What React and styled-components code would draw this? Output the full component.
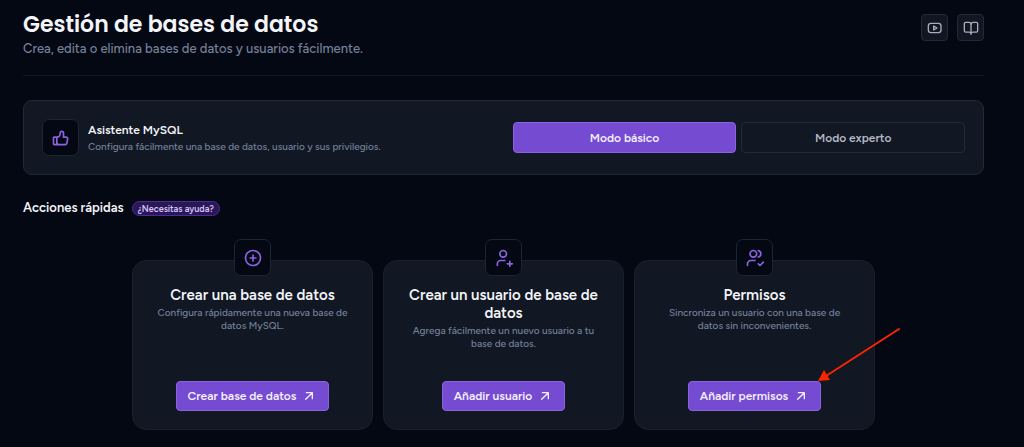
import React from 'react';
import styled, { createGlobalStyle } from 'styled-components';

const icons = {
  video: (
    <>
      <rect x="2" y="5" width="19" height="14" rx="4" />
      <path d="M10 9l5 3l-5 3z" />
    </>
  ),
  book: (
    <>
      <path d="M12 20c-.6 -1.200 -1.5 -1.800 -2.600 -1.800h-5.400a2 2 0 0 1 -2 -2v-10.700a2 2 0 0 1 2 -2h5a3 3 0 0 1 3 3" />
      <path d="M12 20c.6 -1.200 1.5 -1.800 2.600 -1.800h5.400a2 2 0 0 0 2 -2v-10.700a2 2 0 0 0 -2 -2h-5a3 3 0 0 0 -3 3v15" />
    </>
  ),
  thumb: (
    <path d="M7 11v8a1 1 0 0 1 -1 1h-2a1 1 0 0 1 -1 -1v-7a1 1 0 0 1 1 -1h3a4 4 0 0 0 4 -4v-1a2 2 0 0 1 4 0v5h3a2 2 0 0 1 2 2l-1 5a2 3 0 0 1 -2 2h-7a3 3 0 0 1 -3 -3" />
  ),
  plus: (
    <>
      <circle cx="12" cy="12" r="9" />
      <path d="M8.500 12h7M12 8.500v7" />
    </>
  ),
  userPlus: (
    <>
      <circle cx="11" cy="7" r="4" />
      <path d="M16 19h6M19 16v6" />
      <path d="M4 21v-2a4 4 0 0 1 4 -4h5" />
    </>
  ),
  usersCheck: (
    <>
      <circle cx="10" cy="7" r="4" />
      <path d="M16 3.130a4 4 0 0 1 0 7.750" />
      <path d="M3 21v-2a4 4 0 0 1 4 -4h5" />
      <path d="M16 19l2 2l4 -4" />
    </>
  ),
  arrow: (
    <path d="M17 7l-10 10M8 7h9v9" />
  ),
};

const Icon = ({ name, size = 20, stroke = 2 }) => (
  <svg
    width={size}
    height={size}
    viewBox="0 0 24 24"
    fill="none"
    stroke="currentColor"
    strokeWidth={stroke}
    strokeLinecap="round"
    strokeLinejoin="round"
    aria-hidden="true"
  >
    {icons[name]}
  </svg>
);

const actions = [
  {
    icon: 'plus',
    title: 'Crear una base de datos',
    text: 'Configura rápidamente una nueva base de datos MySQL.',
    button: 'Crear base de datos',
  },
  {
    icon: 'userPlus',
    title: 'Crear un usuario de base de datos',
    text: 'Agrega fácilmente un nuevo usuario a tu base de datos.',
    button: 'Añadir usuario',
  },
  {
    icon: 'usersCheck',
    title: 'Permisos',
    text: 'Sincroniza un usuario con una base de datos sin inconvenientes.',
    button: 'Añadir permisos',
    highlighted: true,
  },
];

const App = () => {
  return (
    <>
      <GlobalStyle />
      <Page>
        <Header>
          <div>
            <Title>Gestión de bases de datos</Title>
            <Subtitle>Crea, edita o elimina bases de datos y usuarios fácilmente.</Subtitle>
          </div>
          <HeaderTools>
            <ToolButton type="button" aria-label="Ver vídeo">
              <Icon name="video" size={16} />
            </ToolButton>
            <ToolButton type="button" aria-label="Documentación">
              <Icon name="book" size={16} />
            </ToolButton>
          </HeaderTools>
        </Header>

        <Assistant>
          <IconBox>
            <Icon name="thumb" />
          </IconBox>
          <AssistantText>
            <h2>Asistente MySQL</h2>
            <p>Configura fácilmente una base de datos, usuario y sus privilegios.</p>
          </AssistantText>
          <Modes>
            <ModeButton type="button" $active aria-pressed="true">Modo básico</ModeButton>
            <ModeButton type="button" aria-pressed="false">Modo experto</ModeButton>
          </Modes>
        </Assistant>

        <SectionHeader>
          <h2>Acciones rápidas</h2>
          <HelpLink href="#ayuda">¿Necesitas ayuda?</HelpLink>
        </SectionHeader>

        <Cards>
          {actions.map((action) => (
            <Card key={action.title}>
              <IconBox>
                <Icon name={action.icon} />
              </IconBox>
              <CardTitle>{action.title}</CardTitle>
              <CardText>{action.text}</CardText>
              <ButtonWrap>
                <ActionButton type="button">
                  {action.button}
                  <Icon name="arrow" size={16} />
                </ActionButton>
                {action.highlighted && (
                  <Pointer viewBox="0 0 84 56" aria-hidden="true">
                    <path d="M82 2L9 49" stroke="#fb2500" strokeWidth="2" strokeLinecap="round" />
                    <path d="M1 54L7 43L13 53z" fill="#fb2500" />
                  </Pointer>
                )}
              </ButtonWrap>
            </Card>
          ))}
        </Cards>
      </Page>
    </>
  );
};

const GlobalStyle = createGlobalStyle`
  * {
    box-sizing: border-box;
  }

  body {
    margin: 0;
    background: #040813;
    color: #f4f5f9;
    font-family: Figtree, Lato, sans-serif;
  }

  h1, h2, h3, p {
    margin: 0;
  }

  button {
    font-family: inherit;
    cursor: pointer;
  }

  svg {
    flex-shrink: 0;
  }
`;

const Page = styled.main`
  padding: 10px 40px 16px 23px;
`;

const Header = styled.header`
  display: flex;
  justify-content: space-between;
  align-items: flex-start;
  padding-bottom: 16px;
  margin-bottom: 24px;
  border-bottom: 1px solid #121723;
`;

const Title = styled.h1`
  font-family: Poppins, Inter, sans-serif;
  font-size: 22px;
  font-weight: 600;
  line-height: 29px;
`;

const Subtitle = styled.p`
  font-size: 13px;
  font-weight: 500;
  line-height: 20px;
  color: #74819a;
`;

const HeaderTools = styled.div`
  display: flex;
  gap: 9px;
  padding-top: 4px;
`;

const ToolButton = styled.button`
  display: flex;
  align-items: center;
  justify-content: center;
  width: 27px;
  height: 27px;
  padding: 0;
  border: 1px solid #222a38;
  border-radius: 4px;
  background: #111622;
  color: #a6adbc;
`;

const Assistant = styled.section`
  display: flex;
  align-items: center;
  gap: 9px;
  padding: 18px;
  border: 1px solid #222938;
  border-radius: 9px;
  background: #111723;
`;

const IconBox = styled.div`
  display: flex;
  align-items: center;
  justify-content: center;
  flex-shrink: 0;
  width: 37px;
  height: 37px;
  border: 1px solid #1d2432;
  border-radius: 7px;
  background: #040813;
  color: #8b62e0;
`;

const AssistantText = styled.div`
  flex: 1;

  h2 {
    font-size: 12px;
    font-weight: 600;
    line-height: 18px;
  }

  p {
    font-size: 10px;
    font-weight: 500;
    line-height: 16px;
    color: #74819a;
  }
`;

const Modes = styled.div`
  display: grid;
  grid-template-columns: 1fr 1fr;
  gap: 5px;
  width: 49%;
`;

const ModeButton = styled.button`
  height: 31px;
  padding: 0 12px;
  border: 1px solid ${({ $active }) => ($active ? '#8c62e3' : '#222938')};
  border-radius: 4px;
  background: ${({ $active }) => ($active ? '#744bd1' : 'transparent')};
  color: ${({ $active }) => ($active ? '#f4effd' : '#b4b9c5')};
  font-size: 12px;
  font-weight: 600;
`;

const SectionHeader = styled.div`
  display: flex;
  align-items: center;
  gap: 8px;
  margin: 23px 0 21px;

  h2 {
    font-size: 13px;
    font-weight: 600;
    line-height: 20px;
  }
`;

const HelpLink = styled.a`
  padding: 0 5px;
  border: 1px solid #4c2c94;
  border-radius: 8px;
  background: #2a1758;
  color: #d5c4f7;
  font-size: 9px;
  font-weight: 600;
  line-height: 13px;
  text-decoration: none;
`;

const Cards = styled.div`
  display: grid;
  grid-template-columns: repeat(3, minmax(0, 241px));
  justify-content: center;
  gap: 10px;
  padding-top: 21px;
`;

const Card = styled.article`
  display: flex;
  flex-direction: column;
  align-items: center;
  min-height: 170px;
  padding: 0 20px 18px;
  border: 1px solid #191f2c;
  border-radius: 14px;
  background: #111723;
  text-align: center;

  ${IconBox} {
    margin-top: -22px;
  }
`;

const CardTitle = styled.h3`
  margin: 10px 0 2px;
  font-size: 15px;
  font-weight: 600;
  line-height: 18px;
`;

const CardText = styled.p`
  max-width: 196px;
  font-size: 10px;
  font-weight: 500;
  line-height: 13px;
  color: #74819a;
`;

const ButtonWrap = styled.div`
  position: relative;
  margin-top: auto;
`;

const ActionButton = styled.button`
  display: flex;
  align-items: center;
  gap: 5px;
  height: 30px;
  padding: 0 11px;
  border: 1px solid #8c62e3;
  border-radius: 4px;
  background: #744bd1;
  color: #f4effd;
  font-size: 12px;
  font-weight: 600;
`;

const Pointer = styled.svg`
  position: absolute;
  left: 100%;
  bottom: 100%;
  width: 84px;
  height: 56px;
  margin: 0 0 -2px -4px;
  fill: none;
  pointer-events: none;
`;

export default App;
